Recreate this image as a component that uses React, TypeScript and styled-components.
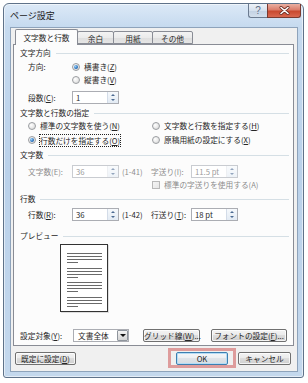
import React from 'react';
import styled, { createGlobalStyle } from 'styled-components';

const GlobalStyle = createGlobalStyle`
  html, body {
    margin: 0;
    padding: 0;
    background: #ffffff;
  }
  body {
    font-family: "Noto Sans CJK JP", "Noto Sans", sans-serif;
    font-size: 7.7px;
    color: #262626;
  }
  * {
    box-sizing: border-box;
  }
`;

const Screen = styled.div`
  width: 308px;
  height: 383px;
  padding: 3px 0 0 3px;
`;

const Window = styled.div`
  width: 301px;
  height: 375px;
  border: 1px solid #5f7289;
  border-radius: 6px 6px 3px 3px;
  background: linear-gradient(180deg, #dce9f7 0%, #c6daef 6%, #bad1ea 45%, #c4d8ed 100%);
  box-shadow: inset 0 0 0 1px rgba(255, 255, 255, 0.55);
  display: flex;
  flex-direction: column;
  padding: 0 5px 5px 6px;
`;

const TitleBar = styled.div`
  height: 23px;
  display: flex;
  justify-content: space-between;
  align-items: flex-start;
`;

const Title = styled.div`
  padding-top: 6px;
  font-size: 9px;
  line-height: 11px;
  color: #1a1a1a;
`;

const CaptionButtons = styled.div`
  display: flex;
  margin-right: -3px;
`;

const HelpButton = styled.div`
  width: 19px;
  height: 14px;
  border: 1px solid #6b7b90;
  border-top: none;
  border-right: none;
  border-radius: 0 0 0 3px;
  background: linear-gradient(180deg, #eef3f9 0%, #d6e1ee 50%, #c2d1e3 51%, #d3dfec 100%);
  display: flex;
  align-items: center;
  justify-content: center;
  font-family: "Liberation Sans", sans-serif;
  font-size: 10px;
  line-height: 10px;
  color: #5d6d85;
`;

const CloseButton = styled.div`
  width: 34px;
  height: 14px;
  border: 1px solid #7a3a30;
  border-top: none;
  border-radius: 0 0 3px 0;
  background: linear-gradient(180deg, #eab0a2 0%, #db7d6b 45%, #c9492f 55%, #d96850 100%);
  display: flex;
  align-items: center;
  justify-content: center;
`;

const Client = styled.div`
  flex: 1;
  background: #f0f0f0;
  border: 1px solid #8ea3bb;
  display: flex;
  flex-direction: column;
  padding: 1px 3px 0 2px;
`;

const TabStrip = styled.div`
  height: 16px;
  display: flex;
  align-items: flex-end;
  padding-left: 2px;
  margin-bottom: -1px;
  position: relative;
  z-index: 1;
`;

const Tab = styled.div<{ $w: number; $active?: boolean }>`
  width: ${p => p.$w}px;
  height: ${p => (p.$active ? 16 : 13)}px;
  margin-bottom: ${p => (p.$active ? 0 : 1)}px;
  margin-left: ${p => (p.$active ? 0 : -1)}px;
  border: 1px solid #898c95;
  border-bottom: ${p => (p.$active ? 'none' : '1px solid #898c95')};
  border-radius: 2px 2px 0 0;
  background: ${p =>
    p.$active ? '#fcfcfc' : 'linear-gradient(180deg, #f3f3f3 0%, #ebebeb 50%, #dedede 51%, #e5e5e5 100%)'};
  display: flex;
  align-items: center;
  justify-content: center;
  padding-top: ${p => (p.$active ? 0 : 1)}px;
  line-height: 11px;
  &:first-child {
    margin-left: 0;
  }
`;

const Panel = styled.div`
  height: 302px;
  flex: none;
  border: 1px solid #898c95;
  background: #fcfcfc;
  display: flex;
  flex-direction: column;
  padding: 2px 4px 0 6px;
`;

const Heading = styled.div<{ $mt: number }>`
  height: 12px;
  margin-top: ${p => p.$mt}px;
  display: flex;
  align-items: center;
  gap: 5px;
  line-height: 12px;
  &::after {
    content: '';
    flex: 1;
    height: 1px;
    background: #d5dfe5;
  }
`;

const Row = styled.div<{ $mt: number; $h?: number; $pl?: number }>`
  height: ${p => p.$h ?? 12}px;
  margin-top: ${p => p.$mt}px;
  padding-left: ${p => p.$pl ?? 8}px;
  display: flex;
  align-items: center;
  line-height: 12px;
`;

const OptionGrid = styled.div<{ $mt: number }>`
  height: 12px;
  margin-top: ${p => p.$mt}px;
  padding-left: 8px;
  display: grid;
  grid-template-columns: 124px 1fr;
  align-items: center;
  line-height: 12px;
`;

const Label = styled.span<{ $w: number; $disabled?: boolean }>`
  width: ${p => p.$w}px;
  flex: none;
  color: ${p => (p.$disabled ? '#8c8c8c' : 'inherit')};
  white-space: nowrap;
`;

const RangeText = styled.span<{ $disabled?: boolean }>`
  width: 32px;
  flex: none;
  padding-left: 3px;
  color: ${p => (p.$disabled ? '#8c8c8c' : 'inherit')};
  white-space: nowrap;
`;

const Key = styled.span`
  text-decoration: underline;
  text-underline-offset: 1px;
`;

const Option = styled.span<{ $disabled?: boolean }>`
  display: inline-flex;
  align-items: center;
  gap: 4px;
  white-space: nowrap;
  color: ${p => (p.$disabled ? '#8c8c8c' : 'inherit')};
`;

const Focused = styled.span`
  outline: 1px dotted #222;
  outline-offset: 0;
  line-height: 11px;
`;

const Radio = styled.span<{ $checked?: boolean }>`
  width: 8px;
  height: 8px;
  flex: none;
  border-radius: 50%;
  border: 1px solid #9a9da1;
  background: radial-gradient(circle at 35% 35%, #ffffff 0%, #e6e6e6 60%, #d2d2d2 100%);
  display: flex;
  align-items: center;
  justify-content: center;
  &::after {
    content: '';
    display: ${p => (p.$checked ? 'block' : 'none')};
    width: 4px;
    height: 4px;
    border-radius: 50%;
    background: radial-gradient(circle at 35% 35%, #9fd3f7 0%, #2f78c4 55%, #164d8c 100%);
  }
`;

const CheckBox = styled.span`
  width: 8px;
  height: 8px;
  flex: none;
  border: 1px solid #b8b8b8;
  background: linear-gradient(135deg, #f4f4f4, #e6e6e6);
`;

const SpinFrame = styled.div<{ $w: number; $disabled?: boolean }>`
  width: ${p => p.$w}px;
  height: 13px;
  flex: none;
  border: 1px solid ${p => (p.$disabled ? '#c9ccd1' : '#abadb3')};
  background: #ffffff;
  display: flex;
`;

const SpinValue = styled.span<{ $disabled?: boolean }>`
  flex: 1;
  padding-left: 3px;
  line-height: 11px;
  color: ${p => (p.$disabled ? '#9a9a9a' : '#262626')};
  white-space: nowrap;
`;

const SpinButtons = styled.div<{ $disabled?: boolean }>`
  width: 11px;
  display: flex;
  flex-direction: column;
  border-left: 1px solid ${p => (p.$disabled ? '#e2e6eb' : '#d3dce8')};
  background: linear-gradient(180deg, #f6f9fc 0%, #e3ebf4 100%);
  opacity: ${p => (p.$disabled ? 0.6 : 1)};
`;

const SpinArrow = styled.span<{ $up?: boolean }>`
  flex: 1;
  display: flex;
  align-items: center;
  justify-content: center;
  &::after {
    content: '';
    border-left: 2px solid transparent;
    border-right: 2px solid transparent;
    ${p => (p.$up ? 'border-bottom: 2px solid #4d6b92;' : 'border-top: 2px solid #4d6b92;')}
  }
`;

const Combo = styled.div`
  width: 56px;
  height: 13px;
  flex: none;
  border: 1px solid #abadb3;
  background: #ffffff;
  display: flex;
`;

const ComboText = styled.span`
  flex: 1;
  padding-left: 4px;
  line-height: 11px;
  white-space: nowrap;
`;

const ComboButton = styled.span`
  width: 11px;
  border: 1px solid #8f959d;
  border-radius: 1px;
  background: linear-gradient(180deg, #f4f4f4 0%, #e2e2e2 50%, #d4d4d4 100%);
  display: flex;
  align-items: center;
  justify-content: center;
  &::after {
    content: '';
    border-left: 3px solid transparent;
    border-right: 3px solid transparent;
    border-top: 3px solid #111;
  }
`;

const Button = styled.button<{ $w: number; $ml?: number; $default?: boolean }>`
  width: ${p => p.$w}px;
  height: 13px;
  flex: none;
  margin-left: ${p => p.$ml ?? 0}px;
  padding: 0;
  font: inherit;
  line-height: 11px;
  color: #262626;
  white-space: nowrap;
  border: 1px solid ${p => (p.$default ? '#3c7fb1' : '#707070')};
  border-radius: 2px;
  background: ${p =>
    p.$default
      ? 'linear-gradient(180deg, #f5f7f9 0%, #eceff2 49%, #dfe4e9 50%, #d6dce2 100%)'
      : 'linear-gradient(180deg, #f3f3f3 0%, #ebebeb 49%, #dddddd 50%, #cfcfcf 100%)'};
  box-shadow: ${p => (p.$default ? 'inset 0 0 0 1px #b5dcf5' : 'inset 0 0 0 1px rgba(255, 255, 255, 0.75)')};
`;

const PreviewPage = styled.div`
  width: 48px;
  height: 68px;
  margin-top: 2px;
  margin-left: 40px;
  flex: none;
  border: 1px solid #333;
  background: #ffffff;
  box-shadow: 1px 1px 0 rgba(0, 0, 0, 0.12);
`;

const Footer = styled.div`
  margin-top: 2px;
  padding: 0 3px 0 2px;
  display: flex;
  align-items: center;
`;

const Spacer = styled.div`
  flex: 1;
`;

const Highlight = styled.div`
  border: 3px solid #de9c9c;
  padding: 1px 5px 0 5px;
  display: flex;
`;

type SpinProps = { value: string; width: number; disabled?: boolean };

const SpinBox = ({ value, width, disabled }: SpinProps) => (
  <SpinFrame $w={width} $disabled={disabled}>
    <SpinValue $disabled={disabled}>{value}</SpinValue>
    <SpinButtons $disabled={disabled}>
      <SpinArrow $up />
      <SpinArrow />
    </SpinButtons>
  </SpinFrame>
);

const PreviewLines = () => {
  const groups = [8, 23, 37, 52];
  return (
    <svg width="46" height="66" viewBox="0 0 46 66">
      {groups.map(y => (
        <g key={y} stroke="#6a6a6a" strokeWidth="1">
          <line x1="6" x2="41" y1={y + 0.5} y2={y + 0.5} />
          <line x1="6" x2="41" y1={y + 3.5} y2={y + 3.5} />
          <line x1="6" x2="41" y1={y + 6.5} y2={y + 6.5} />
          <line x1="6" x2="17" y1={y + 9.5} y2={y + 9.5} />
        </g>
      ))}
    </svg>
  );
};

const CloseGlyph = () => (
  <svg width="11" height="9" viewBox="0 0 11 9">
    <path d="M2 1.5 L9 7.5 M9 1.5 L2 7.5" stroke="#6a2b21" strokeWidth="3" strokeLinecap="round" />
    <path d="M2 1.5 L9 7.5 M9 1.5 L2 7.5" stroke="#ffffff" strokeWidth="1.6" strokeLinecap="round" />
  </svg>
);

export default function App() {
  return (
    <Screen>
      <GlobalStyle />
      <Window>
        <TitleBar>
          <Title>ページ設定</Title>
          <CaptionButtons>
            <HelpButton>?</HelpButton>
            <CloseButton>
              <CloseGlyph />
            </CloseButton>
          </CaptionButtons>
        </TitleBar>

        <Client>
          <TabStrip>
            <Tab $w={63} $active>文字数と行数</Tab>
            <Tab $w={37}>余白</Tab>
            <Tab $w={40}>用紙</Tab>
            <Tab $w={41}>その他</Tab>
          </TabStrip>

          <Panel>
            <Heading $mt={0}>文字方向</Heading>
            <Row $mt={2}>
              <Label $w={44}>方向:</Label>
              <Option>
                <Radio $checked />
                <span>横書き(<Key>Z</Key>)</span>
              </Option>
            </Row>
            <Row $mt={1}>
              <Label $w={44} />
              <Option>
                <Radio />
                <span>縦書き(<Key>V</Key>)</span>
              </Option>
            </Row>
            <Row $mt={5} $h={13}>
              <Label $w={44}>段数(<Key>C</Key>):</Label>
              <SpinBox value="1" width={47} />
            </Row>

            <Heading $mt={3}>文字数と行数の指定</Heading>
            <OptionGrid $mt={1}>
              <Option>
                <Radio />
                <span>標準の文字数を使う(<Key>N</Key>)</span>
              </Option>
              <Option>
                <Radio />
                <span>文字数と行数を指定する(<Key>H</Key>)</span>
              </Option>
            </OptionGrid>
            <OptionGrid $mt={2}>
              <Option>
                <Radio $checked />
                <Focused>行数だけを指定する(<Key>O</Key>)</Focused>
              </Option>
              <Option>
                <Radio />
                <span>原稿用紙の設定にする(<Key>X</Key>)</span>
              </Option>
            </OptionGrid>

            <Heading $mt={3}>文字数</Heading>
            <Row $mt={4} $h={13}>
              <Label $w={44} $disabled>文字数(E):</Label>
              <SpinBox value="36" width={47} disabled />
              <RangeText $disabled>(1-41)</RangeText>
              <Label $w={40} $disabled>字送り(I):</Label>
              <SpinBox value="11.5 pt" width={47} disabled />
            </Row>
            <Row $mt={1} $pl={132}>
              <Option $disabled>
                <CheckBox />
                <span>標準の字送りを使用する(A)</span>
              </Option>
            </Row>

            <Heading $mt={2}>行数</Heading>
            <Row $mt={3} $h={13}>
              <Label $w={44}>行数(<Key>R</Key>):</Label>
              <SpinBox value="36" width={47} />
              <RangeText>(1-42)</RangeText>
              <Label $w={40}>行送り(<Key>T</Key>):</Label>
              <SpinBox value="18 pt" width={47} />
            </Row>

            <Heading $mt={9}>プレビュー</Heading>
            <PreviewPage>
              <PreviewLines />
            </PreviewPage>

            <Row $mt={17} $h={13} $pl={0}>
              <Label $w={53}>設定対象(<Key>Y</Key>):</Label>
              <Combo>
                <ComboText>文書全体</ComboText>
                <ComboButton />
              </Combo>
              <Button $w={57} $ml={14}>グリッド線(<Key>W</Key>)...</Button>
              <Button $w={76} $ml={11}>フォントの設定(<Key>F</Key>)...</Button>
            </Row>
          </Panel>

          <Footer>
            <Button $w={61}>既定に設定(<Key>D</Key>)</Button>
            <Spacer />
            <Highlight>
              <Button $w={52} $default>OK</Button>
            </Highlight>
            <Button $w={53} $ml={2}>キャンセル</Button>
          </Footer>
        </Client>
      </Window>
    </Screen>
  );
}
